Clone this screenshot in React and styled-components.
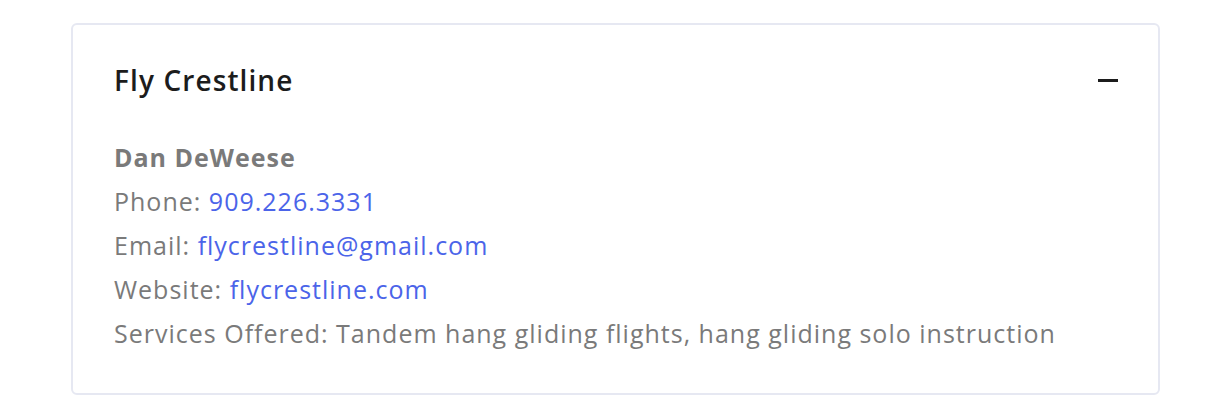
import React from 'react'
import styled, { createGlobalStyle } from 'styled-components'

const GlobalStyle = createGlobalStyle`
    body {
        margin: 0;
        background: #ffffff;
        font-family: 'Open Sans', 'Lato', sans-serif;
    }
`

const Page = styled.div`
    padding: 23px 64px 18px 71px;
`

const Card = styled.div`
    border: 2px solid #e6e8f2;
    border-radius: 6px;
    padding: 35px 40px 38px 41px;
`

const Header = styled.div`
    display: flex;
    flex-direction: row;
    align-items: center;
    justify-content: space-between;
    height: 40px;
`

const Title = styled.h2`
    margin: 0;
    font-size: 28px;
    font-weight: 600;
    letter-spacing: 1.1px;
    color: #1c1c1c;
`

const Toggle = styled.button`
    width: 20px;
    height: 20px;
    border: none;
    background: none;
    padding: 0;
    display: flex;
    align-items: center;
    cursor: pointer;
    &::before {
        content: '';
        display: block;
        width: 20px;
        height: 3px;
        background: #1c1c1c;
    }
`

const Body = styled.div`
    margin-top: 35px;
    font-size: 25px;
    line-height: 44px;
    letter-spacing: 1px;
    color: #7a7a7a;
`

const Name = styled.div`
    font-weight: 700;
`

const Line = styled.div``

const Link = styled.a`
    color: #4b64e9;
    text-decoration: none;
`

const App = () => {
    return (
        <Page>
            <GlobalStyle />
            <Card>
                <Header>
                    <Title>Fly Crestline</Title>
                    <Toggle aria-label="Collapse" />
                </Header>
                <Body>
                    <Name>Dan DeWeese</Name>
                    <Line>Phone: <Link href="#">909.226.3331</Link></Line>
                    <Line>Email: <Link href="#">flycrestline@gmail.com</Link></Line>
                    <Line>Website: <Link href="#">flycrestline.com</Link></Line>
                    <Line>Services Offered: Tandem hang gliding flights, hang gliding solo instruction</Line>
                </Body>
            </Card>
        </Page>
    )
}

export default App
